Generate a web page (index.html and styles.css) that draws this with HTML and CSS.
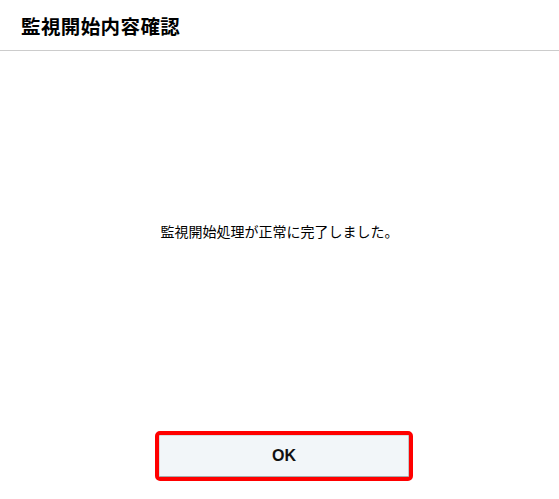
FILE: index.html
```html
<!DOCTYPE html>
<html lang="ja">
<head>
    <meta charset="UTF-8">
    <meta name="viewport" content="width=device-width, initial-scale=1.0">
    <title>監視開始内容確認</title>
    <link rel="stylesheet" href="styles.css">
</head>
<body>
    <div class="dialog">
        <div class="dialog-header">
            <h1>監視開始内容確認</h1>
        </div>

        <div class="dialog-body">
            <p class="message">監視開始処理が正常に完了しました。</p>
        </div>

        <div class="dialog-footer">
            <button type="button" class="ok-button">OK</button>
        </div>
    </div>
</body>
</html>
```

FILE: styles.css
```css
body {
    font-family: "Noto Sans CJK JP", "Noto Sans", sans-serif;
    background-color: #fff;
    color: #000;
    margin: 0;
    padding: 0;
}

.dialog {
    height: 499px;
    display: flex;
    flex-direction: column;
}

.dialog-header {
    height: 50px;
    padding: 0 21px;
    display: flex;
    align-items: center;
    border-bottom: 1px solid #ccc;
}

.dialog-header h1 {
    margin: 0;
    font-size: 19.5px;
    font-weight: bold;
    letter-spacing: 0.4px;
}

.dialog-body {
    flex: 1;
    display: flex;
    align-items: center;
    justify-content: center;
}

.message {
    margin: 0;
    font-size: 14px;
}

.dialog-footer {
    display: flex;
    justify-content: center;
    padding: 24px 0 22px 9px;
}

.ok-button {
    width: 250px;
    height: 42px;
    background-color: #f2f6f9;
    border: 1px solid #d8dde0;
    border-bottom-color: #a8acae;
    border-right-color: #c4c8ca;
    border-radius: 1px;
    outline: 4px solid #f00;
    outline-offset: 0;
    font-family: "Liberation Sans", Arial, sans-serif;
    font-size: 16px;
    font-weight: bold;
    color: #111;
    cursor: pointer;
}
```
